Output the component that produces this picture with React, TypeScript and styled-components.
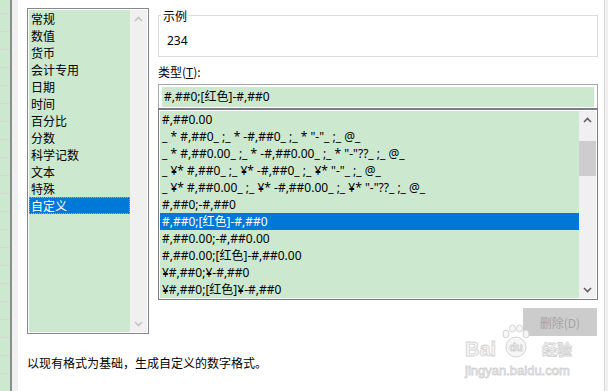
import React from 'react'
import styled, { createGlobalStyle } from 'styled-components'

const GlobalStyle = createGlobalStyle`
  html, body {
    margin: 0;
    padding: 0;
    background: #fff;
  }
  body {
    font-family: "Noto Sans", "Noto Sans CJK SC", sans-serif;
    font-size: 12px;
    color: #000;
  }
`

const GREEN = '#cce8cf'

const categories = ['常规', '数值', '货币', '会计专用', '日期', '时间', '百分比', '分数', '科学记数', '文本', '特殊', '自定义']

const formats = [
    '#,##0.00',
    '_ * #,##0_ ;_ * -#,##0_ ;_ * "-"_ ;_ @_',
    '_ * #,##0.00_ ;_ * -#,##0.00_ ;_ * "-"??_ ;_ @_',
    '_ ¥* #,##0_ ;_ ¥* -#,##0_ ;_ ¥* "-"_ ;_ @_',
    '_ ¥* #,##0.00_ ;_ ¥* -#,##0.00_ ;_ ¥* "-"??_ ;_ @_',
    '#,##0;-#,##0',
    '#,##0;[红色]-#,##0',
    '#,##0.00;-#,##0.00',
    '#,##0.00;[红色]-#,##0.00',
    '¥#,##0;¥-#,##0',
    '¥#,##0;[红色]¥-#,##0',
]

type ArrowProps = { dir: 'up' | 'down'; disabled?: boolean }

const Chevron: React.FC<ArrowProps> = ({ dir, disabled }) => (
    <svg width="9" height="6" viewBox="0 0 9 6">
        <polyline
            points={dir === 'up' ? '1,5 4.5,1.5 8,5' : '1,1 4.5,4.5 8,1'}
            fill="none"
            stroke={disabled ? '#c2c2c2' : '#606060'}
            strokeWidth="1.6"
        />
    </svg>
)

const PawLogo: React.FC = () => (
    <svg width="32" height="34" viewBox="0 0 32 34">
        <g fill="#f6f6f6" stroke="#d4d4d4" strokeWidth="1">
            <ellipse cx="6" cy="10" rx="3" ry="4" />
            <ellipse cx="12.5" cy="4.5" rx="3" ry="3.5" />
            <ellipse cx="19.5" cy="4.5" rx="3" ry="3.5" />
            <ellipse cx="26" cy="10" rx="3" ry="4" />
            <circle cx="16" cy="23" r="10" />
        </g>
        <text x="16" y="27" textAnchor="middle" fontSize="11" fontWeight="bold"
            fontFamily="Liberation Sans, sans-serif" fill="#f6f6f6" stroke="#cfcfcf" strokeWidth="0.8">du</text>
    </svg>
)

const App: React.FC = () => {
    return (
        <Screen>
            <GlobalStyle />
            <SheetStrip />
            <SheetEdge />
            <Dialog>
                <CategoryBox>
                    <Rows>
                        {categories.map((c) => (
                            <Row key={c} selected={c === '自定义'}>{c}</Row>
                        ))}
                    </Rows>
                    <ScrollTrack>
                        <ArrowCell><Chevron dir="up" disabled /></ArrowCell>
                        <ArrowCell><Chevron dir="down" disabled /></ArrowCell>
                    </ScrollTrack>
                </CategoryBox>

                <RightColumn>
                    <SampleGroup>
                        <Legend>示例</Legend>
                        <SampleValue>234</SampleValue>
                    </SampleGroup>

                    <FieldLabel>类型(<u>T</u>):</FieldLabel>
                    <TypeInput>
                        <TypeField>#,##0;[红色]-#,##0</TypeField>
                    </TypeInput>

                    <FormatBox>
                        <Rows>
                            {formats.map((f, i) => (
                                <FormatRow key={i} selected={i === 6}>{f}</FormatRow>
                            ))}
                        </Rows>
                        <ScrollTrack>
                            <ArrowCell><Chevron dir="up" /></ArrowCell>
                            <Thumb />
                            <ArrowCell><Chevron dir="down" /></ArrowCell>
                        </ScrollTrack>
                    </FormatBox>

                    <DeleteButton disabled>删除(D)</DeleteButton>
                </RightColumn>

                <Hint>以现有格式为基础，生成自定义的数字格式。</Hint>

                <Watermark>
                    <WmBig>Bai</WmBig>
                    <Paw><PawLogo /></Paw>
                    <WmCjk>经验</WmCjk>
                    <WmUrl>jingyan.baidu.com</WmUrl>
                </Watermark>
            </Dialog>
            <RightEdge />
        </Screen>
    )
}

const Screen = styled.div`
    display: flex;
    width: 608px;
    height: 391px;
    overflow: hidden;
    position: relative;
    background: #fff;
`

const SheetStrip = styled.div`
    width: 10px;
    flex: none;
    background: repeating-linear-gradient(to bottom, ${GREEN} 0 17px, #d6d6d6 17px 18px);
    background-position: 0 -4px;
`

const SheetEdge = styled.div`
    width: 6px;
    flex: none;
    background: #f0f0f0;
    border-left: 2px solid #8c8c8c;
`

const RightEdge = styled.div`
    width: 3px;
    flex: none;
    background: #f0f0f0;
    border-left: 1px solid #dadada;
`

const Dialog = styled.div`
    flex: 1;
    display: grid;
    grid-template-columns: 122px 440px;
    grid-template-rows: auto auto;
    column-gap: 9px;
    align-content: start;
    padding: 8px 0 0 9px;
    position: relative;
`

const ListFrame = styled.div`
    display: flex;
    border: 1px solid #828790;
    padding: 1px;
    background: #fff;
`

const CategoryBox = styled(ListFrame)`
    height: 326px;
    box-sizing: border-box;
    align-self: start;
`

const FormatBox = styled(ListFrame)`
    height: 192px;
    box-sizing: border-box;
    border-color: #7a7d85;
    border-top-width: 2px;
`

const Rows = styled.div`
    flex: 1;
    background: ${GREEN};
    overflow: hidden;
`

const Row = styled.div<{ selected?: boolean }>`
    height: 17px;
    line-height: 17px;
    padding-left: 2px;
    white-space: pre;
    font-family: "Noto Sans CJK SC", sans-serif;
    background: ${(p) => (p.selected ? '#0078d7' : 'transparent')};
    color: ${(p) => (p.selected ? '#fff' : '#000')};
    outline: ${(p) => (p.selected ? '1px dotted #e8a040' : 'none')};
    outline-offset: -1px;
`

const FormatRow = styled(Row)`
    font-family: "Noto Sans", "Noto Sans CJK SC", sans-serif;
    outline: none;
`

const ScrollTrack = styled.div`
    width: 17px;
    flex: none;
    background: #f0f0f0;
    display: flex;
    flex-direction: column;
    justify-content: space-between;
`

const ArrowCell = styled.div`
    height: 17px;
    display: flex;
    align-items: center;
    justify-content: center;
`

const Thumb = styled.div`
    height: 35px;
    margin: 13px 0 auto;
    background: #cdcdcd;
`

const RightColumn = styled.div`
    display: flex;
    flex-direction: column;
`

const SampleGroup = styled.fieldset`
    margin: 0;
    padding: 0 2px 7px;
    border: 1px solid #dcdcdc;
    min-width: 0;
`

const Legend = styled.legend`
    padding: 0 2px;
    line-height: 15px;
    font-family: "Noto Sans CJK SC", sans-serif;
    color: #000;
`

const SampleValue = styled.div`
    margin-top: 9px;
    padding-left: 6px;
    line-height: 17px;
`

const FieldLabel = styled.div`
    margin-top: 6px;
    line-height: 17px;
    font-family: "Noto Sans CJK SC", sans-serif;
    u {
        text-underline-offset: 1px;
    }
`

const TypeInput = styled.div`
    margin-top: 4px;
    border: 1px solid #a7a7a7;
    border-bottom: none;
    padding: 2px 3px 1px 3px;
    background: #fff;
`

const TypeField = styled.div`
    height: 20px;
    line-height: 20px;
    padding-left: 2px;
    background: ${GREEN};
    white-space: pre;
`

const DeleteButton = styled.button`
    align-self: flex-end;
    margin: 8px 1px 0 0;
    width: 74px;
    height: 28px;
    border: none;
    background: #cccccc;
    color: #a3a3a3;
    font-family: "Noto Sans CJK SC", sans-serif;
    font-size: 12px;
    padding: 0;
`

const Hint = styled.div`
    grid-column: 1 / span 2;
    margin-top: 18px;
    line-height: 17px;
    font-family: "Noto Sans CJK SC", sans-serif;
`

const Watermark = styled.div`
    position: absolute;
    left: 447px;
    top: 320px;
    width: 120px;
    height: 60px;
    pointer-events: none;
`

const wmText = `
    position: absolute;
    color: #f7f7f7;
    -webkit-text-stroke: 0.8px #d2d2d2;
    font-weight: bold;
    white-space: nowrap;
`

const WmBig = styled.div`
    ${wmText}
    left: 0;
    top: 19px;
    font-family: "Liberation Sans", sans-serif;
    font-size: 20px;
    line-height: 20px;
`

const Paw = styled.div`
    position: absolute;
    left: 35px;
    top: 4px;
    line-height: 0;
`

const WmCjk = styled.div`
    ${wmText}
    left: 77px;
    top: 20px;
    font-family: "Noto Sans CJK SC", sans-serif;
    font-size: 15px;
    line-height: 18px;
`

const WmUrl = styled.div`
    ${wmText}
    left: 0;
    top: 44px;
    font-family: "Liberation Sans", sans-serif;
    font-size: 13px;
    line-height: 14px;
    font-weight: normal;
`

export default App
